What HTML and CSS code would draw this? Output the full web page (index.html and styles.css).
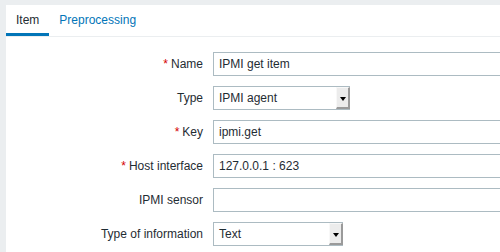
FILE: index.html
```html
<!DOCTYPE html>
<html lang="en">
<head>
    <meta charset="UTF-8">
    <title>Item</title>
    <link rel="stylesheet" href="styles.css">
</head>
<body>
    <div class="panel">
        <ul class="tabs">
            <li class="tab active">Item</li>
            <li class="tab"><a href="#">Preprocessing</a></li>
        </ul>

        <form class="form">
            <label class="label"><span class="req">*</span>Name</label>
            <div class="field"><input class="input" type="text" value="IPMI get item"></div>

            <label class="label">Type</label>
            <div class="field">
                <div class="select type-select">
                    <span>IPMI agent</span>
                    <span class="select-btn"></span>
                </div>
            </div>

            <label class="label"><span class="req">*</span>Key</label>
            <div class="field"><input class="input" type="text" value="ipmi.get"></div>

            <label class="label"><span class="req">*</span>Host interface</label>
            <div class="field"><input class="input" type="text" value="127.0.0.1 : 623"></div>

            <label class="label">IPMI sensor</label>
            <div class="field"><input class="input" type="text" value=""></div>

            <label class="label">Type of information</label>
            <div class="field">
                <div class="select info-select">
                    <span>Text</span>
                    <span class="select-btn"></span>
                </div>
            </div>
        </form>
    </div>
</body>
</html>
```

FILE: styles.css
```css
body {
    margin: 0;
    padding: 5px 0 0 6px;
    background-color: #ebeef0;
    font-family: "Liberation Sans", Arial, sans-serif;
    font-size: 12px;
    color: #1f2c33;
    overflow: hidden;
    height: 252px;
    box-sizing: border-box;
}

.panel {
    background-color: #fff;
    height: 100%;
    overflow: hidden;
}

/* Tabs */
.tabs {
    display: flex;
    list-style: none;
    margin: 0;
    padding: 0;
    border-bottom: 1px solid #ebeef0;
}

.tab {
    padding: 8px 10px 5px;
    line-height: 15px;
    border-bottom: 3px solid transparent;
}

.tab.active {
    border-bottom-color: #0275b8;
}

.tab a {
    color: #0275b8;
    text-decoration: none;
}

/* Form */
.form {
    display: grid;
    grid-template-columns: 197px 1fr;
    column-gap: 10px;
    row-gap: 10px;
    padding-top: 15px;
}

.label {
    text-align: right;
    line-height: 24px;
}

.req {
    color: #d40000;
    margin-right: 3px;
}

.field {
    height: 24px;
    overflow: hidden;
}

.input {
    box-sizing: border-box;
    width: 453px;
    height: 24px;
    margin: 0;
    padding: 0 5px;
    border: 1px solid #acbbc2;
    font-family: inherit;
    font-size: 12px;
    color: #1f2c33;
    background: #fff;
    outline: none;
}

.select {
    box-sizing: border-box;
    height: 24px;
    border: 1px solid #acbbc2;
    border-right: none;
    display: flex;
    align-items: center;
    justify-content: space-between;
    padding-left: 5px;
    background: #fff;
}

.type-select { width: 137px; }
.info-select { width: 130px; }

.select-btn {
    position: relative;
    width: 14px;
    height: 22px;
    box-sizing: border-box;
    background-color: #ececec;
    border-top: 1px solid #f8f8f8;
    border-left: 1px solid #f8f8f8;
    border-right: 2px solid #9a9a9a;
    border-bottom: 2px solid #9a9a9a;
}

.select-btn::after {
    content: "";
    position: absolute;
    left: 3px;
    top: 9px;
    border-left: 3px solid transparent;
    border-right: 3px solid transparent;
    border-top: 4px solid #000;
}
```
